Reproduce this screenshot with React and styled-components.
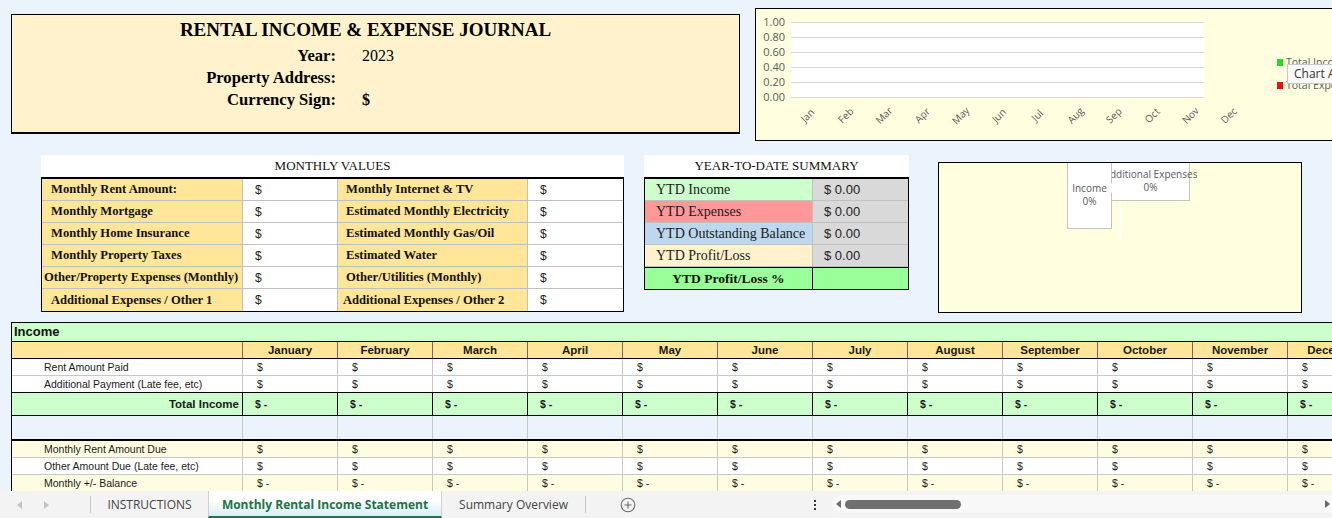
import React from "react";
import styled, { createGlobalStyle } from "styled-components";

const GlobalStyle = createGlobalStyle`
  html, body {
    margin: 0;
    padding: 0;
  }
  body {
    background: #ebf3fc;
    font-family: "Liberation Sans", Arial, sans-serif;
    overflow: hidden;
  }
`;

const SERIF = `"Liberation Serif", "Times New Roman", serif`;
const UI = `"Open Sans", "Noto Sans", sans-serif`;

const Page = styled.div`
  width: 1332px;
  height: 518px;
  display: flex;
  flex-direction: column;
  overflow: hidden;
  background: #ebf3fc;
`;

const Sheet = styled.div`
  flex: 1;
  overflow: hidden;
  min-height: 0;
`;

/* ---------- top section ---------- */

const TopRow = styled.div`
  display: flex;
  align-items: flex-start;
  padding-left: 11px;
  height: 155px;
`;

const HeaderBox = styled.div`
  margin-top: 14px;
  width: 727px;
  height: 117px;
  flex-shrink: 0;
  background: #fff2cc;
  border: 1px solid #000;
  border-bottom-width: 2px;
  font-family: ${SERIF};
  color: #000;
`;

const Title = styled.div`
  margin-top: 3px;
  padding-right: 20px;
  height: 24px;
  line-height: 24px;
  text-align: center;
  font-size: 19px;
  font-weight: bold;
`;

const InfoGrid = styled.div`
  margin-top: 3px;
  display: grid;
  grid-template-columns: 324px auto;
  grid-auto-rows: 22px;
  column-gap: 26px;
  align-items: center;
  font-size: 16.6px;
`;

const InfoLabel = styled.div`
  text-align: right;
  font-weight: bold;
`;

const InfoValue = styled.div`
  font-size: 16px;
  font-weight: ${(p) => (p.$bold ? "bold" : "normal")};
`;

const ChartBox = styled.div`
  position: relative;
  margin-left: 15px;
  margin-top: 8px;
  width: 600px;
  height: 131px;
  flex-shrink: 0;
  background: #ffffe0;
  border: 1px solid #000;
  overflow: hidden;
`;

const Tooltip = styled.div`
  position: absolute;
  left: 531px;
  top: 55px;
  height: 18px;
  padding: 0 6px;
  background: #fafafa;
  border: 1px solid #c8c8c8;
  font-family: ${UI};
  font-size: 12px;
  line-height: 18px;
  color: #333;
  white-space: nowrap;
`;

/* ---------- middle section ---------- */

const MidRow = styled.div`
  display: flex;
  align-items: flex-start;
  padding-left: 41px;
  height: 167px;
`;

const Block = styled.div`
  width: ${(p) => p.$w}px;
  margin-left: ${(p) => p.$ml || 0}px;
  flex-shrink: 0;
  font-family: ${SERIF};
`;

const BlockTitle = styled.div`
  height: 22px;
  line-height: 22px;
  background: #fff;
  text-align: center;
  font-size: 13px;
  color: #111;
`;

const Grid = styled.div`
  border: 1px solid #000;
  border-top-width: 2px;
`;

const GridRow = styled.div`
  display: grid;
  grid-template-columns: ${(p) => p.$cols};
  height: ${(p) => p.$h || 22}px;
  box-sizing: border-box;
  border-bottom: 1px solid #c0c0c0;
  &:last-child {
    border-bottom: none;
  }
`;

const VLabel = styled.div`
  background: ${(p) => p.$bg || "#ffe699"};
  border-right: 1px solid #c0c0c0;
  display: flex;
  align-items: center;
  padding-left: ${(p) => p.$pad ?? 9}px;
  font-size: 12.6px;
  font-weight: bold;
  color: #111;
  white-space: nowrap;
  overflow: hidden;
`;

const VMoney = styled.div`
  background: #fff;
  border-right: 1px solid #c0c0c0;
  display: flex;
  align-items: center;
  padding-left: 12px;
  font-family: "Liberation Sans", Arial, sans-serif;
  font-size: 12px;
  color: #222;
  &:last-child {
    border-right: none;
  }
`;

const YLabel = styled.div`
  background: ${(p) => p.$bg};
  border-right: 1px solid #c0c0c0;
  display: flex;
  align-items: center;
  padding-left: 11px;
  font-size: 14px;
  color: #1a1a1a;
  white-space: nowrap;
`;

const YValue = styled.div`
  background: #d9d9d9;
  display: flex;
  align-items: center;
  padding-left: 11px;
  font-family: "Liberation Sans", Arial, sans-serif;
  font-size: 13px;
  color: #222;
`;

const PctRow = styled.div`
  display: grid;
  grid-template-columns: 168px 95px;
  height: 22px;
  box-sizing: border-box;
  border-top: 1px solid #000;
  background: #99ff99;
`;

const PctLabel = styled.div`
  border-right: 1px solid #000;
  display: flex;
  align-items: center;
  justify-content: center;
  font-size: 13.5px;
  font-weight: bold;
  color: #111;
`;

const PieBox = styled.div`
  position: relative;
  margin-left: 29px;
  margin-top: 7px;
  width: 362px;
  height: 149px;
  flex-shrink: 0;
  background: #ffffe0;
  border: 1px solid #000;
  overflow: hidden;
`;

const Callout = styled.div`
  position: absolute;
  left: ${(p) => p.$x}px;
  top: 0;
  width: ${(p) => p.$w}px;
  height: ${(p) => p.$h}px;
  box-sizing: border-box;
  background: #fff;
  border: 1px solid #c4c4c4;
  border-top: none;
  z-index: ${(p) => p.$z || 1};
  display: flex;
  flex-direction: column;
  align-items: center;
  padding-top: ${(p) => p.$pt}px;
  font-family: ${UI};
  font-size: 10px;
  line-height: 13px;
  color: #595959;
  white-space: nowrap;
`;

const Pointer = styled.div`
  position: absolute;
  right: -7px;
  top: 20px;
  width: 0;
  height: 0;
  border-top: 5px solid transparent;
  border-bottom: 5px solid transparent;
  border-left: 7px solid #fff;
`;

const Leader = styled.div`
  position: absolute;
  left: 180px;
  top: 38px;
  width: 2px;
  height: 36px;
  background: #fff;
`;

/* ---------- income table ---------- */

const Table = styled.div`
  margin-left: 11px;
  border-left: 1px solid #000;
  border-top: 1px solid #000;
  width: max-content;
`;

const SectionRow = styled.div`
  height: 19px;
  box-sizing: border-box;
  background: #ccffcc;
  border-bottom: 1px solid #000;
  padding-left: 2px;
  line-height: 18px;
  font-size: 13px;
  font-weight: bold;
  color: #111;
`;

const Row = styled.div`
  display: grid;
  grid-template-columns: 231px repeat(12, 95px);
  height: ${(p) => p.$h}px;
  box-sizing: border-box;
  background: ${(p) => p.$bg || "transparent"};
  border-bottom: ${(p) => p.$bw || 1}px solid ${(p) => p.$line || "#c8c8c8"};
`;

const Cell = styled.div`
  border-right: 1px solid ${(p) => p.$sep || "#c8c8c8"};
  display: flex;
  align-items: center;
  justify-content: ${(p) => p.$justify || "flex-start"};
  padding: 0 ${(p) => p.$pr || 0}px 0 ${(p) => p.$pl ?? 14}px;
  font-size: ${(p) => p.$fs || 10.5}px;
  font-weight: ${(p) => (p.$bold ? "bold" : "normal")};
  color: #1a1a1a;
  white-space: nowrap;
  overflow: hidden;
`;

/* ---------- sheet tabs ---------- */

const TabBar = styled.div`
  height: 27px;
  flex-shrink: 0;
  display: flex;
  align-items: stretch;
  background: #f3f3f3;
  font-family: ${UI};
  font-size: 12px;
  color: #444;
`;

const NavArea = styled.div`
  width: 90px;
  display: flex;
  align-items: center;
  gap: 22px;
  padding-left: 17px;
  box-sizing: border-box;
`;

const Divider = styled.div`
  width: 1px;
  align-self: center;
  height: 17px;
  background: #c6c6c6;
`;

const Tab = styled.div`
  width: ${(p) => p.$w}px;
  display: flex;
  align-items: center;
  justify-content: center;
  box-sizing: border-box;
  color: ${(p) => (p.$active ? "#217346" : "#444")};
  font-weight: ${(p) => (p.$active ? "bold" : "normal")};
  background: ${(p) =>
    p.$active ? "linear-gradient(#ffffff 0%, #ffffff 40%, #d6eef8 100%)" : "transparent"};
  border-bottom: ${(p) => (p.$active ? "2px solid #217346" : "none")};
  border-left: ${(p) => (p.$active ? "1px solid #d0d0d0" : "none")};
  border-right: ${(p) => (p.$active ? "1px solid #d0d0d0" : "none")};
  padding-top: ${(p) => (p.$active ? 2 : 0)}px;
`;

const AddArea = styled.div`
  width: 84px;
  display: flex;
  align-items: center;
  justify-content: center;
`;

const Spacer = styled.div`
  width: 128px;
`;

const Dots = styled.div`
  width: 34px;
  display: flex;
  flex-direction: column;
  align-items: center;
  justify-content: center;
  gap: 2px;
`;

const Dot = styled.span`
  width: 2px;
  height: 2px;
  background: #333;
`;

const Scroll = styled.div`
  flex: 1;
  margin: 4px 0 5px;
  display: flex;
  align-items: center;
  padding: 0 2px 0 4px;
  background: #f8f8f8;
  border-radius: 9px 0 0 9px;
`;

const Thumb = styled.div`
  margin-left: 4px;
  width: 116px;
  height: 9px;
  border-radius: 5px;
  background: #707070;
`;

const Track = styled.div`
  flex: 1;
`;

const months = [
  "January", "February", "March", "April", "May", "June",
  "July", "August", "September", "October", "November", "December",
];
const shortMonths = ["Jan", "Feb", "Mar", "Apr", "May", "Jun", "Jul", "Aug", "Sep", "Oct", "Nov", "Dec"];

function LineChart() {
  const ticks = ["1.00", "0.80", "0.60", "0.40", "0.20", "0.00"];
  return (
    <svg width="600" height="131" style={{ display: "block" }}>
      <rect x="35" y="13" width="413" height="75" fill="#fff" />
      {ticks.map((t, i) => (
        <g key={t}>
          <line x1="35" x2="448" y1={13.5 + i * 15} y2={13.5 + i * 15} stroke="#d9d9d9" />
          <text
            x="29"
            y={17 + i * 15}
            textAnchor="end"
            fontSize="11"
            fontFamily="Open Sans, sans-serif"
            fill="#595959"
          >
            {t}
          </text>
        </g>
      ))}
      {shortMonths.map((m, i) => (
        <text
          key={m}
          transform={`translate(${54 + i * 38.3},${109}) rotate(-45)`}
          textAnchor="middle"
          fontSize="10"
          fontFamily="Open Sans, sans-serif"
          fill="#595959"
        >
          {m}
        </text>
      ))}
      <rect x="521" y="50" width="6" height="7" fill="#22dd22" />
      <text x="530" y="57" fontSize="10.5" fontFamily="Open Sans, sans-serif" fill="#595959">
        Total Income
      </text>
      <rect x="521" y="73" width="6" height="7" fill="#ee1111" />
      <text x="530" y="80" fontSize="10.5" fontFamily="Open Sans, sans-serif" fill="#595959">
        Total Expenses
      </text>
    </svg>
  );
}

function Triangle({ dir, color }) {
  return (
    <svg width="5" height="8" viewBox="0 0 5 8">
      <path d={dir === "left" ? "M5 0 L0 4 L5 8 Z" : "M0 0 L5 4 L0 8 Z"} fill={color} />
    </svg>
  );
}

const leftValues = [
  "Monthly Rent Amount:",
  "Monthly Mortgage",
  "Monthly Home Insurance",
  "Monthly Property Taxes",
  "Other/Property Expenses (Monthly)",
  "Additional Expenses / Other 1",
];
const rightValues = [
  "Monthly Internet & TV",
  "Estimated Monthly Electricity",
  "Estimated Monthly Gas/Oil",
  "Estimated Water",
  "Other/Utilities (Monthly)",
  "Additional Expenses / Other 2",
];

const ytd = [
  { label: "YTD Income", bg: "#ccffcc" },
  { label: "YTD Expenses", bg: "#ff9999" },
  { label: "YTD Outstanding Balance", bg: "#bdd7ee" },
  { label: "YTD Profit/Loss", bg: "#fff2cc" },
];

function MoneyRow({ label, h, bg, line, bw, dash, bold, sep, labelSep, labelAlign, labelBold, labelFs }) {
  return (
    <Row $h={h} $bg={bg} $line={line} $bw={bw}>
      <Cell
        $pl={labelAlign === "right" ? 0 : 32}
        $pr={labelAlign === "right" ? 3 : 0}
        $justify={labelAlign === "right" ? "flex-end" : "flex-start"}
        $bold={labelBold}
        $fs={labelFs}
        $sep={labelSep || sep}
      >
        {label}
      </Cell>
      {months.map((m) => (
        <Cell key={m} $sep={sep} $bold={bold} $pl={bold ? 12 : 14}>
          {dash ? "$ -" : "$"}
        </Cell>
      ))}
    </Row>
  );
}

export default function App() {
  return (
    <>
      <GlobalStyle />
      <Page>
        <Sheet>
          <TopRow>
            <HeaderBox>
              <Title>RENTAL INCOME &amp; EXPENSE JOURNAL</Title>
              <InfoGrid>
                <InfoLabel>Year:</InfoLabel>
                <InfoValue>2023</InfoValue>
                <InfoLabel>Property Address:</InfoLabel>
                <InfoValue />
                <InfoLabel>Currency Sign:</InfoLabel>
                <InfoValue $bold>$</InfoValue>
              </InfoGrid>
            </HeaderBox>
            <ChartBox>
              <LineChart />
              <Tooltip>Chart Area</Tooltip>
            </ChartBox>
          </TopRow>

          <MidRow>
            <Block $w={583}>
              <BlockTitle>MONTHLY VALUES</BlockTitle>
              <Grid>
                {leftValues.map((l, i) => (
                  <GridRow key={l} $cols="201px 95px 190px 95px">
                    <VLabel $pad={i === 4 ? 2 : 9}>{l}</VLabel>
                    <VMoney>$</VMoney>
                    <VLabel $pad={i === 5 ? 5 : 8}>{rightValues[i]}</VLabel>
                    <VMoney>$</VMoney>
                  </GridRow>
                ))}
              </Grid>
            </Block>

            <Block $w={265} $ml={20}>
              <BlockTitle>YEAR-TO-DATE SUMMARY</BlockTitle>
              <Grid>
                {ytd.map((r) => (
                  <GridRow key={r.label} $cols="168px 95px">
                    <YLabel $bg={r.bg}>{r.label}</YLabel>
                    <YValue>$ 0.00</YValue>
                  </GridRow>
                ))}
                <PctRow>
                  <PctLabel>YTD Profit/Loss %</PctLabel>
                  <div />
                </PctRow>
              </Grid>
            </Block>

            <PieBox>
              <Callout $x={172} $w={79} $h={38} $pt={5}>
                <span>Additional Expenses</span>
                <span>0%</span>
              </Callout>
              <Callout $x={128} $w={45} $h={66} $pt={19} $z={2}>
                <span>Income</span>
                <span>0%</span>
                <Pointer />
              </Callout>
              <Leader />
            </PieBox>
          </MidRow>

          <Table>
            <SectionRow>Income</SectionRow>
            <Row $h={17} $bg="#ffe699" $line="#000">
              <Cell $sep="#6a6a6a" />
              {months.map((m) => (
                <Cell key={m} $sep="#6a6a6a" $justify="center" $pl={0} $bold $fs={11.5}>
                  {m}
                </Cell>
              ))}
            </Row>
            <MoneyRow label="Rent Amount Paid" h={17} bg="#fff" />
            <MoneyRow label="Additional Payment (Late fee, etc)" h={17} bg="#fff" line="#000" />
            <MoneyRow
              label="Total Income"
              h={23}
              bg="#ccffcc"
              line="#000"
              sep="#000"
              dash
              bold
              labelAlign="right"
              labelBold
              labelFs={11.5}
            />
            <Row $h={25} $line="#000" $bw={2}>
              <Cell />
              {months.map((m) => (
                <Cell key={m} />
              ))}
            </Row>
            <MoneyRow label="Monthly Rent Amount Due" h={17} bg="#fffde1" />
            <MoneyRow label="Other Amount Due (Late fee, etc)" h={17} bg="#fff" />
            <MoneyRow label="Monthly +/- Balance" h={17} bg="#fffde1" line="#000" dash />
          </Table>
        </Sheet>

        <TabBar>
          <NavArea>
            <Triangle dir="left" color="#c4c4c4" />
            <Triangle dir="right" color="#c4c4c4" />
          </NavArea>
          <Divider />
          <Tab $w={117}>INSTRUCTIONS</Tab>
          <Tab $w={234} $active>
            Monthly Rental Income Statement
          </Tab>
          <Tab $w={143}>Summary Overview</Tab>
          <Divider />
          <AddArea>
            <svg width="16" height="16" viewBox="0 0 16 16">
              <circle cx="8" cy="8" r="6.8" fill="none" stroke="#6d6d6d" strokeWidth="1.1" />
              <path d="M8 4.5 V11.5 M4.5 8 H11.5" stroke="#6d6d6d" strokeWidth="1.1" />
            </svg>
          </AddArea>
          <Spacer />
          <Dots>
            <Dot />
            <Dot />
            <Dot />
          </Dots>
          <Scroll>
            <Triangle dir="left" color="#6a6a6a" />
            <Thumb />
            <Track />
            <Triangle dir="right" color="#6a6a6a" />
          </Scroll>
        </TabBar>
      </Page>
    </>
  );
}
